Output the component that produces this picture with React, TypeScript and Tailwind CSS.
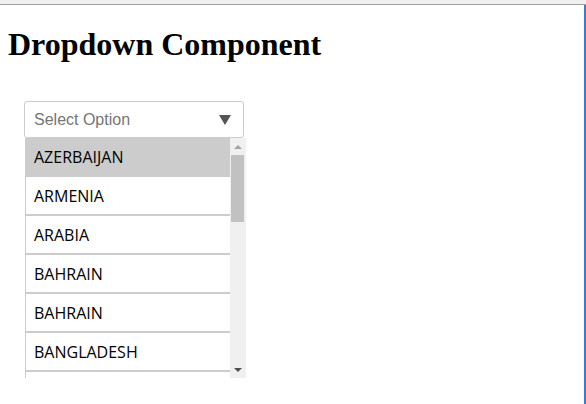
const countries = [
  'AZERBAIJAN',
  'ARMENIA',
  'ARABIA',
  'BAHRAIN',
  'BAHRAIN',
  'BANGLADESH',
  'BELGIUM',
];

export default function App() {
  return (
    <div className="w-[586px] h-[404px] bg-white flex flex-col overflow-hidden">
      {/* window chrome */}
      <div className="h-[4px] bg-[#f0f0f0] shrink-0" />
      <div className="h-px bg-[#a0a0a0] shrink-0" />
      <div className="flex flex-1 min-h-0">
        <div className="flex-1 px-2">
          <h1 className="mt-[21px] mb-[21px] text-[32px] leading-[37px] font-bold text-black font-['Liberation_Serif',serif]">
            Dropdown Component
          </h1>

          {/* Dropdown */}
          <div className="pl-4 pt-[17px]">
            <div className="w-[220px] h-[37px] border border-[#cccccc] rounded-[3px] flex items-center justify-between pl-[9px] pr-[12px] font-['Liberation_Sans',Arial,sans-serif]">
              <span className="text-[16px] text-[#757575]">Select Option</span>
              <svg width="12" height="10" viewBox="0 0 12 10">
                <path d="M0 0 H12 L6 10 Z" fill="#555555" />
              </svg>
            </div>
            <div className="ml-px w-[221px] h-[240px] flex border-l border-[#cccccc] overflow-hidden">
              <div className="w-[204px] font-['Open_Sans',sans-serif]">
                {countries.map((c, i) => (
                  <div
                    key={i}
                    className={`h-[39px] flex items-center pl-[8px] border-b-2 border-[#cccccc] text-[16px] text-black ${i === 0 ? 'bg-[#cccccc]' : 'bg-white'}`}
                  >
                    {c}
                  </div>
                ))}
              </div>
              {/* scrollbar */}
              <div className="w-[16px] bg-[#f0f0f0] flex flex-col">
                <div className="h-[17px] flex items-center justify-center">
                  <svg width="8" height="4" viewBox="0 0 8 4">
                    <path d="M0 4 L4 0 L8 4 Z" fill="#a3a3a3" />
                  </svg>
                </div>
                <div className="flex-1 pl-px pr-[2px]">
                  <div className="h-[67px] bg-[#c1c1c1]" />
                </div>
                <div className="h-[17px] flex items-center justify-center">
                  <svg width="8" height="4" viewBox="0 0 8 4">
                    <path d="M0 0 L8 0 L4 4 Z" fill="#505050" />
                  </svg>
                </div>
              </div>
            </div>
          </div>
        </div>
        <div className="w-[2px] bg-[#3c7bd0] shrink-0" />
      </div>
    </div>
  );
}
